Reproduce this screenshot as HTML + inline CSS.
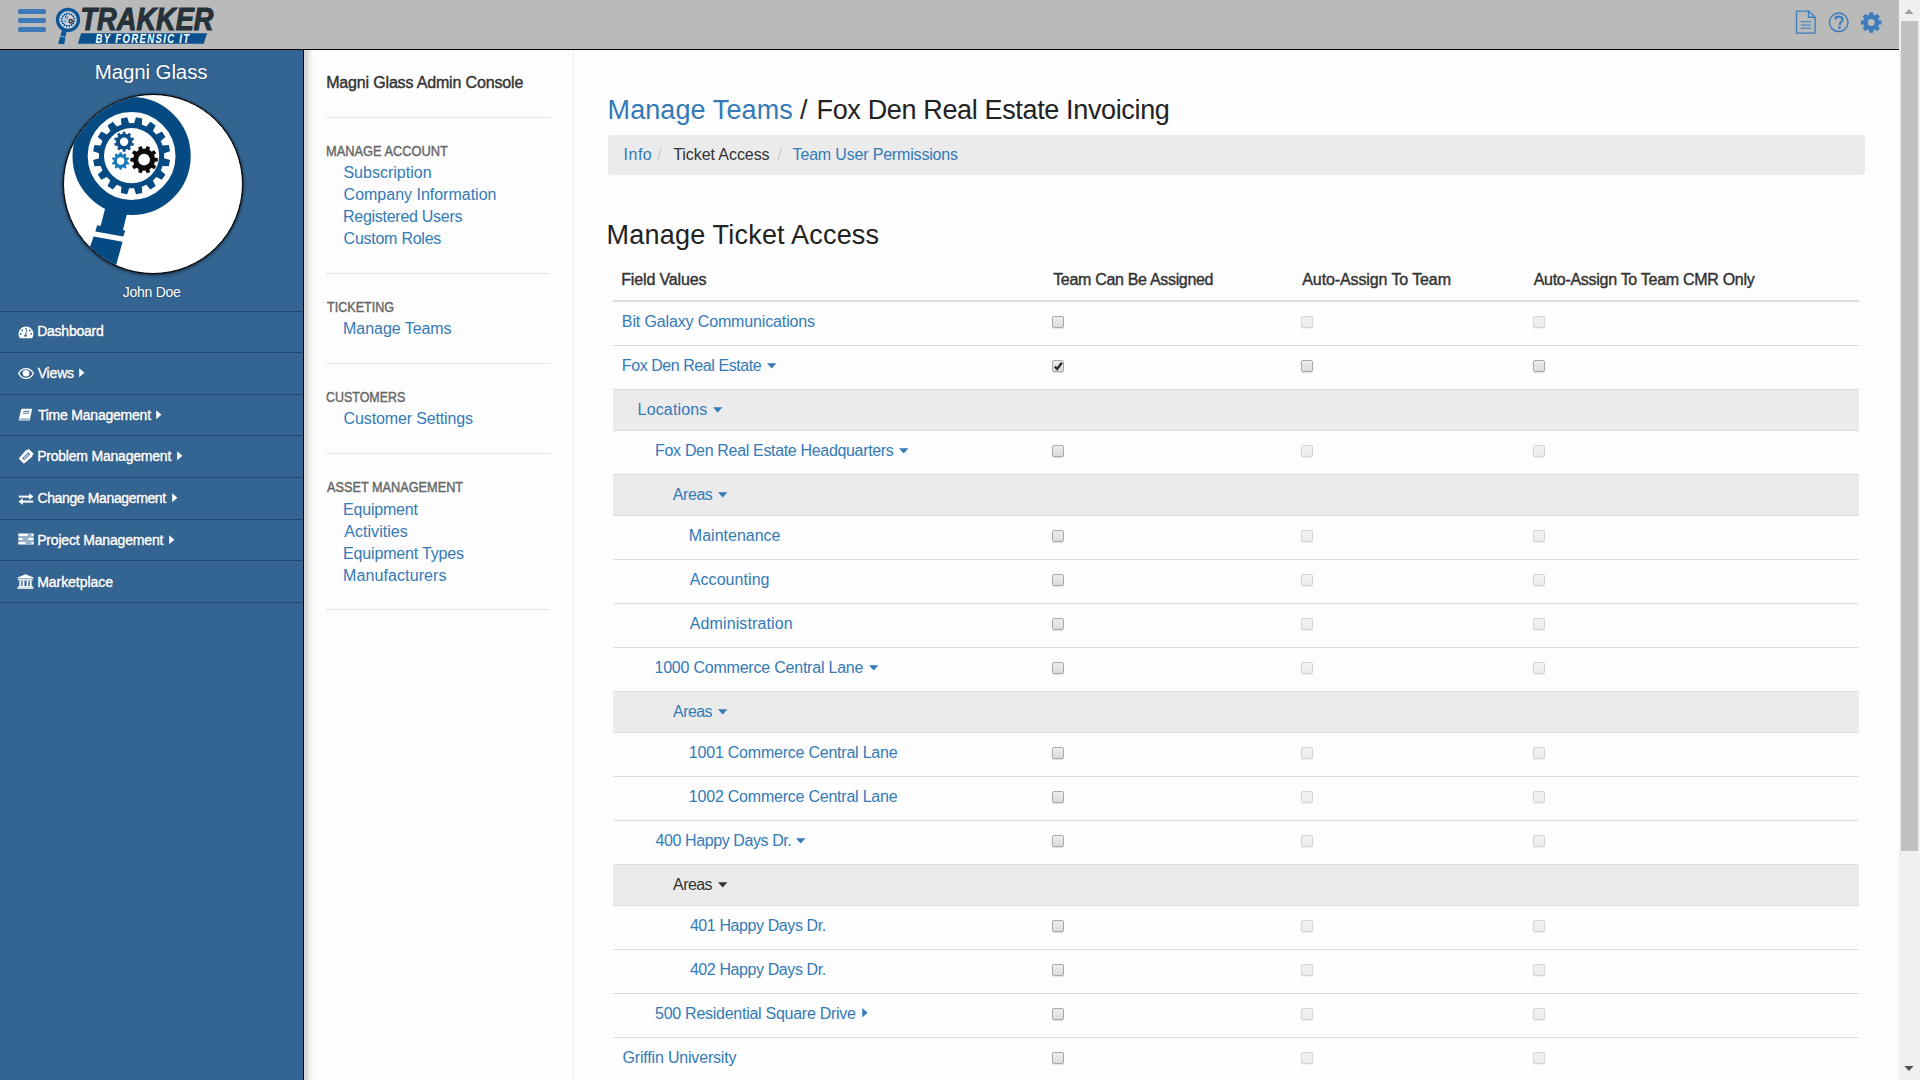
<!DOCTYPE html>
<html><head><meta charset="utf-8"><title>Trakker</title>
<style>
html,body{margin:0;padding:0;}
body{width:1920px;height:1080px;overflow:hidden;position:relative;background:#fdfdfd;font-family:"Liberation Sans",sans-serif;}
.abs{position:absolute;}
.tx{position:absolute;white-space:nowrap;font-family:"Liberation Sans",sans-serif;}
.cb{width:10px;height:10px;border:1px solid #a9a9a9;border-radius:2px;background:linear-gradient(#ededed,#dcdcdc);box-shadow:0 1px 1px rgba(0,0,0,0.12);box-sizing:content-box;}
.cb.dis{border-color:#d4d4d4;background:linear-gradient(#f2f2f2,#ececec);box-shadow:0 1px 1px rgba(0,0,0,0.06);}
</style></head><body>
<!-- top bar -->
<div class="abs" style="left:0;top:0;width:1899px;height:49px;background:#b9bab9"></div>
<div class="abs" style="left:0;top:49px;width:1899px;height:1px;background:#000"></div>
<!-- hamburger -->
<div class="abs" style="left:18px;top:9px;width:28px;height:4.7px;border-radius:1.8px;background:#3b79b9"></div>
<div class="abs" style="left:18px;top:18px;width:28px;height:4.7px;border-radius:1.8px;background:#3b79b9"></div>
<div class="abs" style="left:18px;top:27px;width:28px;height:4.7px;border-radius:1.8px;background:#3b79b9"></div>
<svg class="abs" style="left:0;top:0" width="230" height="49" viewBox="0 0 230 49">
 <circle cx="68" cy="19.8" r="8.8" fill="#e3e6ea"/>
 <circle cx="68" cy="19.8" r="10.5" fill="none" stroke="#0d5596" stroke-width="3.3"/>
 <path d="M68.00 13.50L68.47 13.52L68.88 12.15L70.12 12.40L69.97 13.82L70.41 13.98L70.84 14.18L71.74 13.07L72.79 13.77L72.11 15.03L72.45 15.35L72.77 15.69L74.03 15.01L74.73 16.06L73.62 16.96L73.82 17.39L73.98 17.83L75.40 17.68L75.65 18.92L74.28 19.33L74.30 19.80L74.28 20.27L75.65 20.68L75.40 21.92L73.98 21.77L73.82 22.21L73.62 22.64L74.73 23.54L74.03 24.59L72.77 23.91L72.45 24.25L72.11 24.57L72.79 25.83L71.74 26.53L70.84 25.42L70.41 25.62L69.97 25.78L70.12 27.20L68.88 27.45L68.47 26.08L68.00 26.10L67.53 26.08L67.12 27.45L65.88 27.20L66.03 25.78L65.59 25.62L65.16 25.42L64.26 26.53L63.21 25.83L63.89 24.57L63.55 24.25L63.23 23.91L61.97 24.59L61.27 23.54L62.38 22.64L62.18 22.21L62.02 21.77L60.60 21.92L60.35 20.68L61.72 20.27L61.70 19.80L61.72 19.33L60.35 18.92L60.60 17.68L62.02 17.83L62.18 17.39L62.38 16.96L61.27 16.06L61.97 15.01L63.23 15.69L63.55 15.35L63.89 15.03L63.21 13.77L64.26 13.07L65.16 14.18L65.59 13.98L66.03 13.82L65.88 12.40L67.12 12.15L67.53 13.52ZM73.40 19.80A5.4 5.4 0 1 0 62.60 19.80A5.4 5.4 0 1 0 73.40 19.80Z" fill="#1b5b98" fill-rule="evenodd"/><circle cx="68" cy="19.8" r="5.4" fill="#d0d4d8"/>
 <path d="M65.88 15.85L66.11 15.78L66.14 15.37L66.66 15.37L66.69 15.78L66.92 15.85L67.13 15.96L67.44 15.69L67.81 16.06L67.54 16.37L67.65 16.58L67.72 16.81L68.13 16.84L68.13 17.36L67.72 17.39L67.65 17.62L67.54 17.83L67.81 18.14L67.44 18.51L67.13 18.24L66.92 18.35L66.69 18.42L66.66 18.83L66.14 18.83L66.11 18.42L65.88 18.35L65.67 18.24L65.36 18.51L64.99 18.14L65.26 17.83L65.15 17.62L65.08 17.39L64.67 17.36L64.67 16.84L65.08 16.81L65.15 16.58L65.26 16.37L64.99 16.06L65.36 15.69L65.67 15.96ZM67.15 17.10A0.75 0.75 0 1 0 65.65 17.10A0.75 0.75 0 1 0 67.15 17.10Z" fill="#1d5f9c" fill-rule="evenodd"/>
 <path d="M64.58 19.95L64.81 19.88L64.84 19.47L65.36 19.47L65.39 19.88L65.62 19.95L65.83 20.06L66.14 19.79L66.51 20.16L66.24 20.47L66.35 20.68L66.42 20.91L66.83 20.94L66.83 21.46L66.42 21.49L66.35 21.72L66.24 21.93L66.51 22.24L66.14 22.61L65.83 22.34L65.62 22.45L65.39 22.52L65.36 22.93L64.84 22.93L64.81 22.52L64.58 22.45L64.37 22.34L64.06 22.61L63.69 22.24L63.96 21.93L63.85 21.72L63.78 21.49L63.37 21.46L63.37 20.94L63.78 20.91L63.85 20.68L63.96 20.47L63.69 20.16L64.06 19.79L64.37 20.06ZM65.85 21.20A0.75 0.75 0 1 0 64.35 21.20A0.75 0.75 0 1 0 65.85 21.20Z" fill="#4a9fd4" fill-rule="evenodd"/>
 <path d="M70.02 19.32L70.32 19.24L70.36 18.62L71.04 18.62L71.08 19.24L71.38 19.32L71.67 19.45L72.09 19.00L72.62 19.45L72.25 19.94L72.43 20.20L72.57 20.48L73.18 20.41L73.30 21.09L72.70 21.23L72.67 21.55L72.59 21.85L73.10 22.19L72.76 22.79L72.21 22.51L71.99 22.73L71.73 22.91L71.90 23.50L71.26 23.74L71.01 23.18L70.70 23.20L70.39 23.18L70.14 23.74L69.50 23.50L69.67 22.91L69.41 22.73L69.19 22.51L68.64 22.79L68.30 22.19L68.81 21.85L68.73 21.55L68.70 21.23L68.10 21.09L68.22 20.41L68.83 20.48L68.97 20.20L69.15 19.94L68.78 19.45L69.31 19.00L69.73 19.45ZM71.70 21.20A1.0 1.0 0 1 0 69.70 21.20A1.0 1.0 0 1 0 71.70 21.20Z" fill="#1b1b1b" fill-rule="evenodd"/>
 <path d="M62.0 30.6L66.6 31.6L64.2 44.2L58.0 43.8Z" fill="#0d5596"/>
 <path d="M59.6 36.0L65.6 37.2" stroke="#c9d4df" stroke-width="0.7"/>
 <g transform="translate(80.5 30.2)">
 <text x="0" y="0" font-family="Liberation Sans" font-weight="700" font-style="italic" font-size="30.5" fill="#263239" stroke="#263239" stroke-width="1.1" textLength="133" lengthAdjust="spacingAndGlyphs">TRAKKER</text>
 </g>
 <path d="M81.1 33.2H207.1L203.6 43.8H77.9Z" fill="#0b4f8c"/>
 <g transform="translate(95.6 42.8) scale(0.8 1)"><text x="0" y="0" font-family="Liberation Sans" font-weight="700" font-style="italic" font-size="12" fill="#ffffff" textLength="117" lengthAdjust="spacing">BY FORENSIC IT</text></g>
</svg>

<svg class="abs" style="left:1790px;top:5px" width="100" height="34" viewBox="1790 5 100 34">
 <path d="M1796.5 11.1H1808.8L1815.1 17.3V33.1H1796.5Z" fill="none" stroke="#3d7dbd" stroke-width="1.35" stroke-linejoin="miter"/>
 <path d="M1808.5 11.1V17.2H1815" fill="none" stroke="#3d7dbd" stroke-width="1.35"/>
 <path d="M1800.8 21.7H1811M1800.8 25H1811M1800.8 28.3H1811" stroke="#3d7dbd" stroke-width="1.1"/>
 <circle cx="1838.75" cy="22.3" r="9.3" fill="none" stroke="#3d7dbd" stroke-width="1.45"/>
 <path d="M1835.3 19.6C1835.3 17.6 1836.8 16.6 1838.8 16.6C1840.8 16.6 1842.6 17.8 1842.6 19.6C1842.6 21.6 1839.9 22 1839.9 24.2V25" fill="none" stroke="#3d7dbd" stroke-width="2.1"/>
 <rect x="1838.1" y="26.4" width="2.6" height="2.4" fill="#3d7dbd"/>
 <path d="M1868.19 15.11L1869.20 14.77L1869.29 12.24L1873.21 12.24L1873.30 14.77L1874.31 15.11L1875.27 15.58L1877.12 13.86L1879.89 16.63L1878.17 18.48L1878.64 19.44L1878.98 20.45L1881.51 20.54L1881.51 24.46L1878.98 24.55L1878.64 25.56L1878.17 26.52L1879.89 28.37L1877.12 31.14L1875.27 29.42L1874.31 29.89L1873.30 30.23L1873.21 32.76L1869.29 32.76L1869.20 30.23L1868.19 29.89L1867.23 29.42L1865.38 31.14L1862.61 28.37L1864.33 26.52L1863.86 25.56L1863.52 24.55L1860.99 24.46L1860.99 20.54L1863.52 20.45L1863.86 19.44L1864.33 18.48L1862.61 16.63L1865.38 13.86L1867.23 15.58ZM1874.75 22.50A3.5 3.5 0 1 0 1867.75 22.50A3.5 3.5 0 1 0 1874.75 22.50Z" fill="#3d7dbd" fill-rule="evenodd"/>
</svg>

<!-- sidebar -->
<div class="abs" style="left:0;top:50px;width:303px;height:1030px;background:#346592"></div>
<div class="abs" style="left:303px;top:50px;width:1px;height:1030px;background:#000"></div>
<div class="abs" style="left:0;top:311px;width:303px;height:1px;background:#264a6e"></div><div class="abs" style="left:0;top:352px;width:303px;height:1px;background:#264a6e"></div><div class="abs" style="left:0;top:394px;width:303px;height:1px;background:#264a6e"></div><div class="abs" style="left:0;top:435px;width:303px;height:1px;background:#264a6e"></div><div class="abs" style="left:0;top:477px;width:303px;height:1px;background:#264a6e"></div><div class="abs" style="left:0;top:519px;width:303px;height:1px;background:#264a6e"></div><div class="abs" style="left:0;top:560px;width:303px;height:1px;background:#264a6e"></div><div class="abs" style="left:0;top:602px;width:303px;height:1px;background:#264a6e"></div>
<div class="abs" style="left:62.5px;top:94.2px;width:178px;height:178px;border-radius:50%;background:#fff;border:1px solid #000;box-shadow:0 0 2px 0.5px rgba(0,0,0,0.7),0 2px 4px rgba(0,0,0,0.3);overflow:hidden">
<svg style="position:absolute;left:-63.5px;top:-95.2px" width="303" height="300" viewBox="0 0 303 300">
 <circle cx="131.6" cy="156.0" r="51.5" fill="none" stroke="#064a84" stroke-width="15.2"/>
 <path d="M131.60 123.10L134.03 123.19L136.00 117.25L142.25 118.49L141.80 124.74L144.08 125.58L146.29 126.60L150.38 121.86L155.68 125.40L152.87 130.99L154.65 132.65L156.31 134.43L161.90 131.62L165.44 136.92L160.70 141.01L161.72 143.22L162.56 145.50L168.81 145.05L170.05 151.30L164.11 153.27L164.20 155.70L164.11 158.13L170.05 160.10L168.81 166.35L162.56 165.90L161.72 168.18L160.70 170.39L165.44 174.48L161.90 179.78L156.31 176.97L154.65 178.75L152.87 180.41L155.68 186.00L150.38 189.54L146.29 184.80L144.08 185.82L141.80 186.66L142.25 192.91L136.00 194.15L134.03 188.21L131.60 188.30L129.17 188.21L127.20 194.15L120.95 192.91L121.40 186.66L119.12 185.82L116.91 184.80L112.82 189.54L107.52 186.00L110.33 180.41L108.55 178.75L106.89 176.97L101.30 179.78L97.76 174.48L102.50 170.39L101.48 168.18L100.64 165.90L94.39 166.35L93.15 160.10L99.09 158.13L99.00 155.70L99.09 153.27L93.15 151.30L94.39 145.05L100.64 145.50L101.48 143.22L102.50 141.01L97.76 136.92L101.30 131.62L106.89 134.43L108.55 132.65L110.33 130.99L107.52 125.40L112.82 121.86L116.91 126.60L119.12 125.58L121.40 124.74L120.95 118.49L127.20 117.25L129.17 123.19ZM159.20 155.70A27.6 27.6 0 1 0 104.00 155.70A27.6 27.6 0 1 0 159.20 155.70Z" fill="#064a84" fill-rule="evenodd"/>
 <path d="M121.63 134.09L122.60 133.84L122.83 131.68L125.37 131.68L125.60 133.84L126.57 134.09L127.51 134.46L128.97 132.85L131.01 134.34L129.93 136.22L130.57 137.00L131.11 137.85L133.24 137.40L134.02 139.81L132.04 140.70L132.10 141.70L132.04 142.70L134.02 143.59L133.24 146.00L131.11 145.55L130.57 146.40L129.93 147.18L131.01 149.06L128.97 150.55L127.51 148.94L126.57 149.31L125.60 149.56L125.37 151.72L122.83 151.72L122.60 149.56L121.63 149.31L120.69 148.94L119.23 150.55L117.19 149.06L118.27 147.18L117.63 146.40L117.09 145.55L114.96 146.00L114.18 143.59L116.16 142.70L116.10 141.70L116.16 140.70L114.18 139.81L114.96 137.40L117.09 137.85L117.63 137.00L118.27 136.22L117.19 134.34L119.23 132.85L120.69 134.46ZM128.30 141.70A4.2 4.2 0 1 0 119.90 141.70A4.2 4.2 0 1 0 128.30 141.70Z" fill="#0e4f8a" fill-rule="evenodd"/>
 <path d="M118.44 154.34L119.29 154.12L119.50 152.27L121.70 152.27L121.91 154.12L122.76 154.34L123.58 154.67L124.84 153.29L126.62 154.59L125.70 156.21L126.26 156.89L126.73 157.63L128.56 157.25L129.24 159.35L127.54 160.12L127.60 161.00L127.54 161.88L129.24 162.65L128.56 164.75L126.73 164.37L126.26 165.11L125.70 165.79L126.62 167.41L124.84 168.71L123.58 167.33L122.76 167.66L121.91 167.88L121.70 169.73L119.50 169.73L119.29 167.88L118.44 167.66L117.62 167.33L116.36 168.71L114.58 167.41L115.50 165.79L114.94 165.11L114.47 164.37L112.64 164.75L111.96 162.65L113.66 161.88L113.60 161.00L113.66 160.12L111.96 159.35L112.64 157.25L114.47 157.63L114.94 156.89L115.50 156.21L114.58 154.59L116.36 153.29L117.62 154.67ZM124.30 161.00A3.7 3.7 0 1 0 116.90 161.00A3.7 3.7 0 1 0 124.30 161.00Z" fill="#1b78b8" fill-rule="evenodd"/>
 <path d="M144.10 148.70L145.48 148.79L146.70 146.10L150.00 147.17L149.40 150.06L150.57 150.80L151.63 151.68L154.20 150.22L156.24 153.03L154.05 155.02L154.56 156.30L154.91 157.64L157.84 157.96L157.84 161.44L154.91 161.76L154.56 163.10L154.05 164.38L156.24 166.37L154.20 169.18L151.63 167.72L150.57 168.60L149.40 169.34L150.00 172.23L146.70 173.30L145.48 170.61L144.10 170.70L142.72 170.61L141.50 173.30L138.20 172.23L138.80 169.34L137.63 168.60L136.57 167.72L134.00 169.18L131.96 166.37L134.15 164.38L133.64 163.10L133.29 161.76L130.36 161.44L130.36 157.96L133.29 157.64L133.64 156.30L134.15 155.02L131.96 153.03L134.00 150.22L136.57 151.68L137.63 150.80L138.80 150.06L138.20 147.17L141.50 146.10L142.72 148.79ZM150.00 159.70A5.9 5.9 0 1 0 138.20 159.70A5.9 5.9 0 1 0 150.00 159.70Z" fill="#0a0a0a" fill-rule="evenodd"/>
 <path d="M106 205L128 209.5L122.6 231.5L100.3 227.3Z" fill="#064a84"/>
 <path d="M97.2 225.2L125.2 230.4L123.3 236.6L95.3 231.4Z" fill="#064a84"/>
 <path d="M93.6 236.6L122.6 241.8L110 287L78 281Z" fill="#064a84"/>
</svg>
</div>


<svg class="abs" style="left:18px;top:326px" width="16" height="13" viewBox="0 0 16 13">
 <path d="M8 0.5C3.9 0.5 0.6 3.8 0.6 7.9c0 1.6 0.5 3 1.3 4.3h12.2c0.8-1.2 1.3-2.7 1.3-4.3C15.4 3.8 12.1 0.5 8 0.5z" fill="#ffffff"/>
 <circle cx="8" cy="2.8" r="0.9" fill="#346592"/><circle cx="4.2" cy="4.4" r="0.9" fill="#346592"/><circle cx="11.8" cy="4.4" r="0.9" fill="#346592"/>
 <circle cx="2.8" cy="7.9" r="0.9" fill="#346592"/><circle cx="13.2" cy="7.9" r="0.9" fill="#346592"/>
 <path d="M8.9 3.6L7.6 8.6" stroke="#346592" stroke-width="0.9"/><circle cx="7.6" cy="9.6" r="1.3" fill="#346592"/>
</svg>
<svg class="abs" style="left:18px;top:368px" width="16" height="11" viewBox="0 0 16 11">
 <path d="M0.6 5.5C2.4 2.3 5 0.6 8 0.6s5.6 1.7 7.4 4.9C13.6 8.7 11 10.4 8 10.4S2.4 8.7 0.6 5.5z" fill="none" stroke="#ffffff" stroke-width="1.3"/>
 <circle cx="8" cy="5.3" r="3.3" fill="#ffffff"/>
</svg>
<svg class="abs" style="left:18px;top:408px" width="15" height="14" viewBox="0 0 15 14">
 <path d="M4 0.8H14.2L11.6 12.6H1.2L0.8 11.6L3.2 1.6Z" fill="#ffffff"/>
 <path d="M5.4 3.3H11.6M5 5.2H11.2" stroke="#346592" stroke-width="0.9"/>
 <path d="M1.8 11.1H11" stroke="#346592" stroke-width="0.8"/>
</svg>
<svg class="abs" style="left:17.6px;top:447.8px" width="16.5" height="16.5" viewBox="0 0 15 15">
 <path d="M9.6 0.6L14.4 5.4L12.8 7L13.3 7.5L5.4 14.4L0.6 9.6L7.5 1.7L8 2.2Z" fill="#ffffff"/>
 <path d="M9.3 3.9L11.1 5.7L5.6 11.2L3.8 9.4Z" fill="#346592"/>
 <path d="M9.3 5.1L9.9 5.7L5.6 10L5 9.4Z" fill="#ffffff"/>
</svg>
<svg class="abs" style="left:18px;top:492.6px" width="16" height="12" viewBox="0 0 16 12">
 <path d="M0.8 3.6H12.4" stroke="#ffffff" stroke-width="2"/><path d="M11.2 0.2L15.4 3.6L11.2 7Z" fill="#ffffff"/>
 <path d="M15.2 8.6H3.6" stroke="#ffffff" stroke-width="2"/><path d="M4.8 5.2L0.6 8.6L4.8 12Z" fill="#ffffff"/>
</svg>
<svg class="abs" style="left:18px;top:533px" width="16" height="12" viewBox="0 0 16 12">
 <rect x="0.3" y="0.5" width="15.4" height="3" fill="#ffffff"/><rect x="0.3" y="4.5" width="15.4" height="3" fill="#ffffff"/><rect x="0.3" y="8.5" width="15.4" height="3" fill="#ffffff"/>
 <rect x="9.5" y="1.5" width="4" height="1" fill="#346592"/><rect x="4.5" y="5.5" width="6" height="1" fill="#346592"/><rect x="7.5" y="9.5" width="6" height="1" fill="#346592"/>
</svg>
<svg class="abs" style="left:17px;top:574px" width="17" height="15" viewBox="0 0 17 15">
 <path d="M8.5 0.3L16.5 3.6V4.6H0.5V3.6Z" fill="#ffffff"/>
 <rect x="1.2" y="5.2" width="14.6" height="1.3" fill="#ffffff"/>
 <rect x="2.4" y="6.5" width="1.8" height="5.6" fill="#ffffff"/><rect x="5.6" y="6.5" width="1.8" height="5.6" fill="#ffffff"/><rect x="9.6" y="6.5" width="1.8" height="5.6" fill="#ffffff"/><rect x="12.8" y="6.5" width="1.8" height="5.6" fill="#ffffff"/>
 <rect x="1.2" y="12.1" width="14.6" height="1.2" fill="#ffffff"/><rect x="0.4" y="13.3" width="16.2" height="1.5" fill="#ffffff"/>
</svg>

<svg class="abs" style="left:79.3px;top:368.0px" width="6" height="10" viewBox="0 0 6 10"><path d="M0.2 0.2V9.2L5.4 4.7Z" fill="#fff"/></svg><svg class="abs" style="left:156.0px;top:410.0px" width="6" height="10" viewBox="0 0 6 10"><path d="M0.2 0.2V9.2L5.4 4.7Z" fill="#fff"/></svg><svg class="abs" style="left:177.3px;top:451.0px" width="6" height="10" viewBox="0 0 6 10"><path d="M0.2 0.2V9.2L5.4 4.7Z" fill="#fff"/></svg><svg class="abs" style="left:172.0px;top:493.0px" width="6" height="10" viewBox="0 0 6 10"><path d="M0.2 0.2V9.2L5.4 4.7Z" fill="#fff"/></svg><svg class="abs" style="left:168.7px;top:535.0px" width="6" height="10" viewBox="0 0 6 10"><path d="M0.2 0.2V9.2L5.4 4.7Z" fill="#fff"/></svg>
<!-- admin panel -->
<div class="abs" style="left:304px;top:50px;width:14px;height:1030px;background:linear-gradient(to right,rgba(0,0,0,0.13) 0px,rgba(0,0,0,0.17) 2px,rgba(0,0,0,0.08) 5px,rgba(0,0,0,0.025) 8px,rgba(0,0,0,0) 11px)"></div>
<div class="abs" style="left:573px;top:50px;width:1px;height:1030px;background:#efefef"></div>
<div class="abs" style="left:326px;top:117px;width:224px;height:1px;background:#e5e5e5"></div><div class="abs" style="left:326px;top:273px;width:224px;height:1px;background:#e5e5e5"></div><div class="abs" style="left:326px;top:363px;width:224px;height:1px;background:#e5e5e5"></div><div class="abs" style="left:326px;top:453px;width:224px;height:1px;background:#e5e5e5"></div><div class="abs" style="left:326px;top:609px;width:224px;height:1px;background:#e5e5e5"></div>
<!-- breadcrumb -->
<div class="abs" style="left:608px;top:135px;width:1257px;height:40px;border-radius:4px;background:#ebebeb"></div>
<!-- table -->
<div class="abs" style="left:613px;top:300px;width:1246px;height:2px;background:#dddddd"></div>
<div class="abs" style="left:613px;top:345px;width:1246px;height:1px;background:#dddddd"></div><div class="abs cb" style="left:1052px;top:316px"></div><div class="abs cb dis" style="left:1301px;top:316px"></div><div class="abs cb dis" style="left:1533px;top:316px"></div><div class="abs" style="left:613px;top:389px;width:1246px;height:1px;background:#dddddd"></div><svg class="abs" style="left:766.7px;top:363.2px" width="10" height="6" viewBox="0 0 10 6"><path d="M0 0.3H9.4L4.7 5.6Z" fill="#337ab7"/></svg><div class="abs cb" style="left:1052px;top:360px"><svg width="11" height="11" viewBox="0 0 11 11" style="position:absolute;left:0;top:0"><path d="M1.8 5.6L4.2 8.0L8.8 1.8" stroke="#2b2b2b" stroke-width="2.4" fill="none"/></svg></div><div class="abs cb" style="left:1301px;top:360px"></div><div class="abs cb" style="left:1533px;top:360px"></div><div class="abs" style="left:613px;top:390px;width:1246px;height:40px;background:#ebebeb"></div><div class="abs" style="left:613px;top:430px;width:1246px;height:1px;background:#dddddd"></div><svg class="abs" style="left:712.6px;top:407.2px" width="10" height="6" viewBox="0 0 10 6"><path d="M0 0.3H9.4L4.7 5.6Z" fill="#337ab7"/></svg><div class="abs" style="left:613px;top:474px;width:1246px;height:1px;background:#dddddd"></div><svg class="abs" style="left:899.1px;top:448.2px" width="10" height="6" viewBox="0 0 10 6"><path d="M0 0.3H9.4L4.7 5.6Z" fill="#337ab7"/></svg><div class="abs cb" style="left:1052px;top:445px"></div><div class="abs cb dis" style="left:1301px;top:445px"></div><div class="abs cb dis" style="left:1533px;top:445px"></div><div class="abs" style="left:613px;top:475px;width:1246px;height:40px;background:#ebebeb"></div><div class="abs" style="left:613px;top:515px;width:1246px;height:1px;background:#dddddd"></div><svg class="abs" style="left:718.0px;top:492.2px" width="10" height="6" viewBox="0 0 10 6"><path d="M0 0.3H9.4L4.7 5.6Z" fill="#337ab7"/></svg><div class="abs" style="left:613px;top:559px;width:1246px;height:1px;background:#dddddd"></div><div class="abs cb" style="left:1052px;top:530px"></div><div class="abs cb dis" style="left:1301px;top:530px"></div><div class="abs cb dis" style="left:1533px;top:530px"></div><div class="abs" style="left:613px;top:603px;width:1246px;height:1px;background:#dddddd"></div><div class="abs cb" style="left:1052px;top:574px"></div><div class="abs cb dis" style="left:1301px;top:574px"></div><div class="abs cb dis" style="left:1533px;top:574px"></div><div class="abs" style="left:613px;top:647px;width:1246px;height:1px;background:#dddddd"></div><div class="abs cb" style="left:1052px;top:618px"></div><div class="abs cb dis" style="left:1301px;top:618px"></div><div class="abs cb dis" style="left:1533px;top:618px"></div><div class="abs" style="left:613px;top:691px;width:1246px;height:1px;background:#dddddd"></div><svg class="abs" style="left:868.6px;top:665.2px" width="10" height="6" viewBox="0 0 10 6"><path d="M0 0.3H9.4L4.7 5.6Z" fill="#337ab7"/></svg><div class="abs cb" style="left:1052px;top:662px"></div><div class="abs cb dis" style="left:1301px;top:662px"></div><div class="abs cb dis" style="left:1533px;top:662px"></div><div class="abs" style="left:613px;top:692px;width:1246px;height:40px;background:#ebebeb"></div><div class="abs" style="left:613px;top:732px;width:1246px;height:1px;background:#dddddd"></div><svg class="abs" style="left:717.8px;top:709.2px" width="10" height="6" viewBox="0 0 10 6"><path d="M0 0.3H9.4L4.7 5.6Z" fill="#337ab7"/></svg><div class="abs" style="left:613px;top:776px;width:1246px;height:1px;background:#dddddd"></div><div class="abs cb" style="left:1052px;top:747px"></div><div class="abs cb dis" style="left:1301px;top:747px"></div><div class="abs cb dis" style="left:1533px;top:747px"></div><div class="abs" style="left:613px;top:820px;width:1246px;height:1px;background:#dddddd"></div><div class="abs cb" style="left:1052px;top:791px"></div><div class="abs cb dis" style="left:1301px;top:791px"></div><div class="abs cb dis" style="left:1533px;top:791px"></div><div class="abs" style="left:613px;top:864px;width:1246px;height:1px;background:#dddddd"></div><svg class="abs" style="left:796.1px;top:838.2px" width="10" height="6" viewBox="0 0 10 6"><path d="M0 0.3H9.4L4.7 5.6Z" fill="#337ab7"/></svg><div class="abs cb" style="left:1052px;top:835px"></div><div class="abs cb dis" style="left:1301px;top:835px"></div><div class="abs cb dis" style="left:1533px;top:835px"></div><div class="abs" style="left:613px;top:865px;width:1246px;height:40px;background:#ebebeb"></div><div class="abs" style="left:613px;top:905px;width:1246px;height:1px;background:#dddddd"></div><svg class="abs" style="left:717.8px;top:882.2px" width="10" height="6" viewBox="0 0 10 6"><path d="M0 0.3H9.4L4.7 5.6Z" fill="#333333"/></svg><div class="abs" style="left:613px;top:949px;width:1246px;height:1px;background:#dddddd"></div><div class="abs cb" style="left:1052px;top:920px"></div><div class="abs cb dis" style="left:1301px;top:920px"></div><div class="abs cb dis" style="left:1533px;top:920px"></div><div class="abs" style="left:613px;top:993px;width:1246px;height:1px;background:#dddddd"></div><div class="abs cb" style="left:1052px;top:964px"></div><div class="abs cb dis" style="left:1301px;top:964px"></div><div class="abs cb dis" style="left:1533px;top:964px"></div><div class="abs" style="left:613px;top:1037px;width:1246px;height:1px;background:#dddddd"></div><svg class="abs" style="left:861.7px;top:1008.2px" width="6" height="10" viewBox="0 0 6 10"><path d="M0.3 0V9.4L5.6 4.7Z" fill="#337ab7"/></svg><div class="abs cb" style="left:1052px;top:1008px"></div><div class="abs cb dis" style="left:1301px;top:1008px"></div><div class="abs cb dis" style="left:1533px;top:1008px"></div><div class="abs" style="left:613px;top:1081px;width:1246px;height:1px;background:#dddddd"></div><div class="abs cb" style="left:1052px;top:1052px"></div><div class="abs cb dis" style="left:1301px;top:1052px"></div><div class="abs cb dis" style="left:1533px;top:1052px"></div>
<div id="t0" class="tx" style="left:94.76px;top:62.34px;font-size:20.5px;line-height:20.5px;font-weight:400;color:#ffffff;letter-spacing:-0.116px;text-shadow:0 0 2px rgba(0,20,50,0.45);">Magni Glass</div><div id="t1" class="tx" style="left:122.77px;top:285.15px;font-size:14px;line-height:14px;font-weight:400;color:#ffffff;letter-spacing:-0.275px;text-shadow:0 0 2px rgba(0,20,50,0.45);">John Doe</div><div id="t2" class="tx" style="left:37.14px;top:323.95px;font-size:14px;line-height:14px;font-weight:400;-webkit-text-stroke:0.4px #ffffff;color:#ffffff;letter-spacing:-0.230px;text-shadow:0 0 2px rgba(0,20,50,0.45);">Dashboard</div><div id="t3" class="tx" style="left:37.73px;top:365.85px;font-size:14px;line-height:14px;font-weight:400;-webkit-text-stroke:0.4px #ffffff;color:#ffffff;letter-spacing:-0.183px;text-shadow:0 0 2px rgba(0,20,50,0.45);">Views</div><div id="t4" class="tx" style="left:37.89px;top:407.85px;font-size:14px;line-height:14px;font-weight:400;-webkit-text-stroke:0.4px #ffffff;color:#ffffff;letter-spacing:-0.214px;text-shadow:0 0 2px rgba(0,20,50,0.45);">Time Management</div><div id="t5" class="tx" style="left:37.13px;top:448.85px;font-size:14px;line-height:14px;font-weight:400;-webkit-text-stroke:0.4px #ffffff;color:#ffffff;letter-spacing:-0.210px;text-shadow:0 0 2px rgba(0,20,50,0.45);">Problem Management</div><div id="t6" class="tx" style="left:37.45px;top:490.85px;font-size:14px;line-height:14px;font-weight:400;-webkit-text-stroke:0.4px #ffffff;color:#ffffff;letter-spacing:-0.372px;text-shadow:0 0 2px rgba(0,20,50,0.45);">Change Management</div><div id="t7" class="tx" style="left:37.13px;top:532.85px;font-size:14px;line-height:14px;font-weight:400;-webkit-text-stroke:0.4px #ffffff;color:#ffffff;letter-spacing:-0.169px;text-shadow:0 0 2px rgba(0,20,50,0.45);">Project Management</div><div id="t8" class="tx" style="left:37.25px;top:574.85px;font-size:14px;line-height:14px;font-weight:400;-webkit-text-stroke:0.4px #ffffff;color:#ffffff;letter-spacing:-0.059px;text-shadow:0 0 2px rgba(0,20,50,0.45);">Marketplace</div><div id="t9" class="tx" style="left:326.14px;top:75.25px;font-size:16px;line-height:16px;font-weight:400;-webkit-text-stroke:0.4px #333333;color:#333333;letter-spacing:-0.159px;">Magni Glass Admin Console</div><div id="t10" class="tx" style="left:326.48px;top:143.95px;font-size:14px;line-height:14px;font-weight:400;-webkit-text-stroke:0.4px #666666;color:#666666;letter-spacing:0.000px;transform:scaleX(0.9163);transform-origin:0 0;">MANAGE ACCOUNT</div><div id="t11" class="tx" style="left:343.38px;top:165.25px;font-size:16px;line-height:16px;font-weight:400;color:#337ab7;letter-spacing:0.013px;">Subscription</div><div id="t12" class="tx" style="left:343.60px;top:187.25px;font-size:16px;line-height:16px;font-weight:400;color:#337ab7;letter-spacing:-0.007px;">Company Information</div><div id="t13" class="tx" style="left:343.08px;top:209.25px;font-size:16px;line-height:16px;font-weight:400;color:#337ab7;letter-spacing:-0.284px;">Registered Users</div><div id="t14" class="tx" style="left:343.60px;top:231.25px;font-size:16px;line-height:16px;font-weight:400;color:#337ab7;letter-spacing:-0.254px;">Custom Roles</div><div id="t15" class="tx" style="left:326.68px;top:300.15px;font-size:14px;line-height:14px;font-weight:400;-webkit-text-stroke:0.4px #666666;color:#666666;letter-spacing:0.000px;transform:scaleX(0.8984);transform-origin:0 0;">TICKETING</div><div id="t16" class="tx" style="left:343.08px;top:321.45px;font-size:16px;line-height:16px;font-weight:400;color:#337ab7;letter-spacing:-0.053px;">Manage Teams</div><div id="t17" class="tx" style="left:326.22px;top:390.15px;font-size:14px;line-height:14px;font-weight:400;-webkit-text-stroke:0.4px #666666;color:#666666;letter-spacing:0.000px;transform:scaleX(0.8888);transform-origin:0 0;">CUSTOMERS</div><div id="t18" class="tx" style="left:343.60px;top:411.45px;font-size:16px;line-height:16px;font-weight:400;color:#337ab7;letter-spacing:-0.139px;">Customer Settings</div><div id="t19" class="tx" style="left:326.86px;top:480.45px;font-size:14px;line-height:14px;font-weight:400;-webkit-text-stroke:0.4px #666666;color:#666666;letter-spacing:0.000px;transform:scaleX(0.9080);transform-origin:0 0;">ASSET MANAGEMENT</div><div id="t20" class="tx" style="left:343.08px;top:501.75px;font-size:16px;line-height:16px;font-weight:400;color:#337ab7;letter-spacing:-0.208px;">Equipment</div><div id="t21" class="tx" style="left:344.21px;top:523.75px;font-size:16px;line-height:16px;font-weight:400;color:#337ab7;letter-spacing:0.053px;">Activities</div><div id="t22" class="tx" style="left:343.08px;top:545.75px;font-size:16px;line-height:16px;font-weight:400;color:#337ab7;letter-spacing:-0.175px;">Equipment Types</div><div id="t23" class="tx" style="left:343.08px;top:567.75px;font-size:16px;line-height:16px;font-weight:400;color:#337ab7;letter-spacing:0.094px;">Manufacturers</div><div id="t24" class="tx" style="left:607.56px;top:97.04px;font-size:27px;line-height:27px;font-weight:400;color:#337ab7;letter-spacing:0.098px;">Manage Teams</div><div id="t25" class="tx" style="left:800.10px;top:97.04px;font-size:27px;line-height:27px;font-weight:400;color:#222222;letter-spacing:0.000px;">/</div><div id="t26" class="tx" style="left:816.56px;top:97.04px;font-size:27px;line-height:27px;font-weight:400;color:#222222;letter-spacing:-0.354px;">Fox Den Real Estate Invoicing</div><div id="t27" class="tx" style="left:623.50px;top:147.45px;font-size:16px;line-height:16px;font-weight:400;color:#337ab7;letter-spacing:0.518px;">Info</div><div id="t28" class="tx" style="left:657.22px;top:147.45px;font-size:16px;line-height:16px;font-weight:400;color:#cccccc;letter-spacing:0.000px;">/</div><div id="t29" class="tx" style="left:673.16px;top:147.45px;font-size:16px;line-height:16px;font-weight:400;color:#333333;letter-spacing:-0.063px;">Ticket Access</div><div id="t30" class="tx" style="left:777.47px;top:147.45px;font-size:16px;line-height:16px;font-weight:400;color:#cccccc;letter-spacing:0.000px;">/</div><div id="t31" class="tx" style="left:792.60px;top:147.45px;font-size:16px;line-height:16px;font-weight:400;color:#337ab7;letter-spacing:-0.174px;">Team User Permissions</div><div id="t32" class="tx" style="left:606.62px;top:222.14px;font-size:27px;line-height:27px;font-weight:400;color:#222222;letter-spacing:0.201px;">Manage Ticket Access</div><div id="t33" class="tx" style="left:621.26px;top:272.45px;font-size:16px;line-height:16px;font-weight:400;-webkit-text-stroke:0.4px #333333;color:#333333;letter-spacing:-0.152px;">Field Values</div><div id="t34" class="tx" style="left:1053.19px;top:272.45px;font-size:16px;line-height:16px;font-weight:400;-webkit-text-stroke:0.4px #333333;color:#333333;letter-spacing:-0.315px;">Team Can Be Assigned</div><div id="t35" class="tx" style="left:1302.31px;top:272.45px;font-size:16px;line-height:16px;font-weight:400;-webkit-text-stroke:0.4px #333333;color:#333333;letter-spacing:-0.108px;">Auto-Assign To Team</div><div id="t36" class="tx" style="left:1533.68px;top:272.45px;font-size:16px;line-height:16px;font-weight:400;-webkit-text-stroke:0.4px #333333;color:#333333;letter-spacing:-0.287px;">Auto-Assign To Team CMR Only</div><div id="t37" class="tx" style="left:621.86px;top:314.25px;font-size:16px;line-height:16px;font-weight:400;color:#337ab7;letter-spacing:-0.137px;">Bit Galaxy Communications</div><div id="t38" class="tx" style="left:621.86px;top:358.25px;font-size:16px;line-height:16px;font-weight:400;color:#337ab7;letter-spacing:-0.440px;">Fox Den Real Estate</div><div id="t39" class="tx" style="left:637.62px;top:402.25px;font-size:16px;line-height:16px;font-weight:400;color:#337ab7;letter-spacing:0.148px;">Locations</div><div id="t40" class="tx" style="left:655.08px;top:443.25px;font-size:16px;line-height:16px;font-weight:400;color:#337ab7;letter-spacing:-0.330px;">Fox Den Real Estate Headquarters</div><div id="t41" class="tx" style="left:672.82px;top:487.25px;font-size:16px;line-height:16px;font-weight:400;color:#337ab7;letter-spacing:-0.437px;">Areas</div><div id="t42" class="tx" style="left:688.86px;top:528.25px;font-size:16px;line-height:16px;font-weight:400;color:#337ab7;letter-spacing:0.004px;">Maintenance</div><div id="t43" class="tx" style="left:689.82px;top:572.25px;font-size:16px;line-height:16px;font-weight:400;color:#337ab7;letter-spacing:0.056px;">Accounting</div><div id="t44" class="tx" style="left:689.82px;top:616.25px;font-size:16px;line-height:16px;font-weight:400;color:#337ab7;letter-spacing:0.103px;">Administration</div><div id="t45" class="tx" style="left:654.49px;top:660.25px;font-size:16px;line-height:16px;font-weight:400;color:#337ab7;letter-spacing:-0.216px;">1000 Commerce Central Lane</div><div id="t46" class="tx" style="left:673.02px;top:704.25px;font-size:16px;line-height:16px;font-weight:400;color:#337ab7;letter-spacing:-0.560px;">Areas</div><div id="t47" class="tx" style="left:688.87px;top:745.25px;font-size:16px;line-height:16px;font-weight:400;color:#337ab7;letter-spacing:-0.225px;">1001 Commerce Central Lane</div><div id="t48" class="tx" style="left:688.87px;top:789.25px;font-size:16px;line-height:16px;font-weight:400;color:#337ab7;letter-spacing:-0.225px;">1002 Commerce Central Lane</div><div id="t49" class="tx" style="left:655.57px;top:833.25px;font-size:16px;line-height:16px;font-weight:400;color:#337ab7;letter-spacing:-0.408px;">400 Happy Days Dr.</div><div id="t50" class="tx" style="left:673.02px;top:877.25px;font-size:16px;line-height:16px;font-weight:400;color:#333333;letter-spacing:-0.560px;">Areas</div><div id="t51" class="tx" style="left:689.88px;top:918.25px;font-size:16px;line-height:16px;font-weight:400;color:#337ab7;letter-spacing:-0.405px;">401 Happy Days Dr.</div><div id="t52" class="tx" style="left:689.88px;top:962.25px;font-size:16px;line-height:16px;font-weight:400;color:#337ab7;letter-spacing:-0.405px;">402 Happy Days Dr.</div><div id="t53" class="tx" style="left:655.04px;top:1006.25px;font-size:16px;line-height:16px;font-weight:400;color:#337ab7;letter-spacing:-0.265px;">500 Residential Square Drive</div><div id="t54" class="tx" style="left:622.57px;top:1050.25px;font-size:16px;line-height:16px;font-weight:400;color:#337ab7;letter-spacing:-0.185px;">Griffin University</div>
<div class="abs" style="left:1899px;top:0;width:21px;height:1080px;background:#f0f0f0"></div>
<div class="abs" style="left:1901px;top:21px;width:17px;height:830px;background:#c1c1c1"></div>
<svg class="abs" style="left:1903px;top:8px" width="12" height="7" viewBox="0 0 12 7"><path d="M1.4 6H10.6L6 1Z" fill="#a3a3a3"/></svg>
<svg class="abs" style="left:1903px;top:1065px" width="12" height="7" viewBox="0 0 12 7"><path d="M1.4 1H10.6L6 6Z" fill="#505050"/></svg>
</body></html>
